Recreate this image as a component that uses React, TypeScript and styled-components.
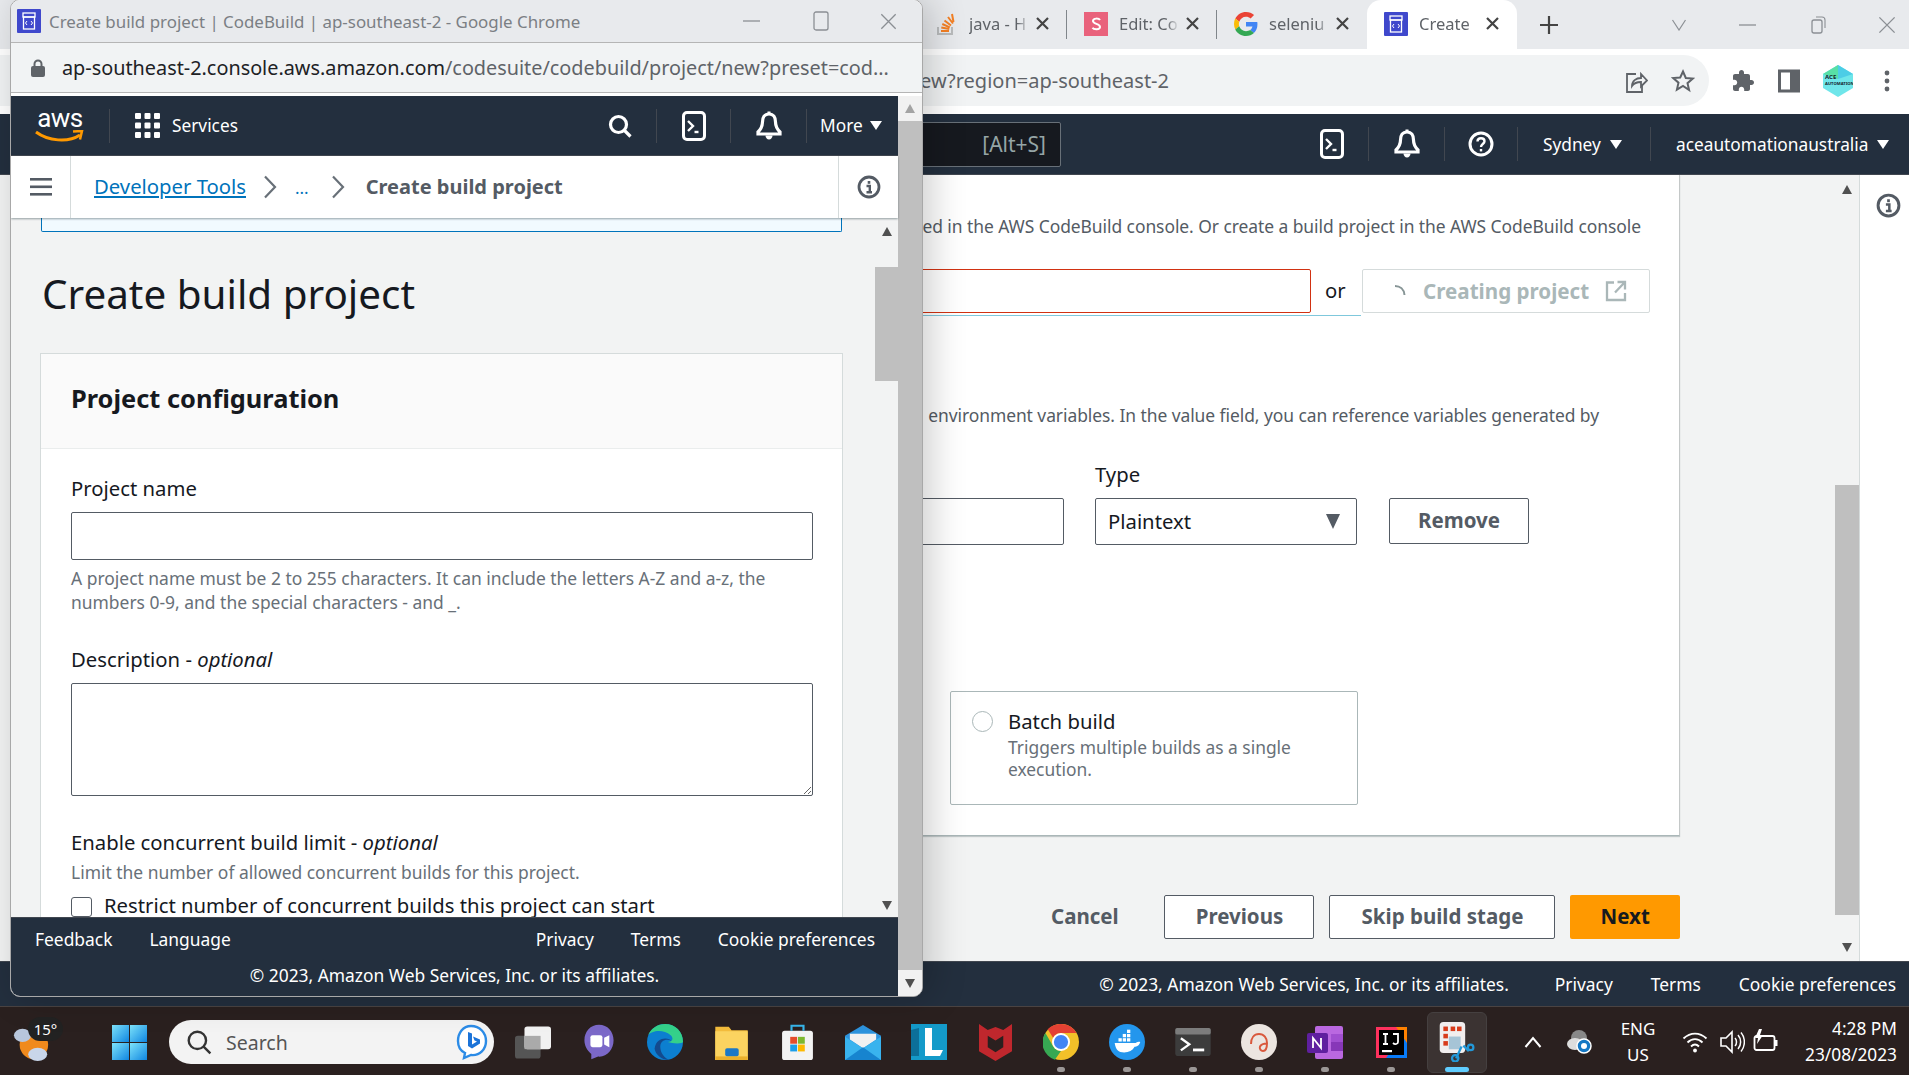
import React from 'react';
import styled, { createGlobalStyle } from 'styled-components';

const Global = createGlobalStyle`
  html, body { margin: 0; padding: 0; width: 1909px; height: 1075px; overflow: hidden; background: #fff; }
  body { font-family: "Noto Sans", Roboto, "Liberation Sans", sans-serif; color: #16191f; }
  * { box-sizing: border-box; }
`;

const Desktop = styled.div`
  position: relative; width: 1909px; height: 1075px; display: flex; flex-direction: column; overflow: hidden;
`;
const BackWindow = styled.div`
  height: 1006px; display: flex; flex-direction: column; background: #fff; flex: none;
`;
const TabStrip = styled.div`
  height: 49px; flex: none; background: #e8eaed; display: flex; align-items: stretch; padding-left: 917px; padding-right: 13px;
`;
const Tab = styled.div<{ $active?: boolean; $sep?: boolean }>`
  width: 150px; display: flex; align-items: center; padding-left: 17px; padding-bottom: 2px; position: relative;
  background: ${p => (p.$active ? '#fff' : 'transparent')};
  border-radius: ${p => (p.$active ? '14px 14px 0 0' : '0')};
  &::after {
    content: ''; display: ${p => (p.$sep ? 'block' : 'none')};
    position: absolute; right: 0; top: 10px; height: 29px; width: 1px; background: #80868b;
  }
`;
const TabLabel = styled.span`
  width: 60px; margin-left: 11px; overflow: hidden; white-space: nowrap; font-size: 16.500px; color: #5f6368;
  -webkit-mask-image: linear-gradient(90deg, #000 80%, transparent);
  mask-image: linear-gradient(90deg, #000 80%, transparent);
`;
const TabClose = styled.span`
  margin-left: 7px; display: flex;
`;
const PlusBtn = styled.div`
  margin-left: 22px; display: flex; align-items: center;
`;
const WinControls = styled.div<{ $gap: number }>`
  margin-left: auto; display: flex; align-items: center; gap: ${p => p.$gap}px;
`;

const AddressRow = styled.div`
  height: 65px; flex: none; background: #fff; display: flex; align-items: flex-start;
`;
const Pill = styled.div`
  width: 1709px; height: 51px; margin-top: 6px; background: #f1f3f4; border-radius: 0 26px 26px 0;
  display: flex; align-items: center; padding-right: 14px;
`;
const BackUrl = styled.span`
  width: 1169px; text-align: right; white-space: nowrap; font-size: 20px; color: #5f6368;
`;
const PillIcons = styled.div`
  margin-left: auto; display: flex; gap: 23px; align-items: center;
`;
const ExtIcons = styled.div`
  margin: 6px 0 0 22px; height: 51px; display: flex; gap: 23px; align-items: center;
`;
const DotsWrap = styled.span`
  margin-left: 7px; display: flex;
`;

const Nav = styled.div<{ $h: number }>`
  height: ${p => p.$h}px; flex: none; background: #232f3e; display: flex; align-items: center; color: #fff;
  border-bottom: 1px solid #414750;
`;
const NavCell = styled.div<{ $w?: number; $sep?: boolean; $ml?: string; $pl?: number }>`
  ${p => (p.$w ? `width: ${p.$w}px;` : '')}
  height: 34px; display: flex; align-items: center; flex: none;
  justify-content: ${p => (p.$pl !== undefined ? 'flex-start' : 'center')};
  padding-left: ${p => p.$pl ?? 0}px;
  margin-left: ${p => p.$ml ?? '0'};
  border-right: ${p => (p.$sep ? '1px solid #414750' : 'none')};
  font-size: 17.300px; white-space: nowrap;
`;
const ServicesWord = styled.span`
  margin-left: 12px;
`;
const SearchBox = styled.div`
  margin-left: 500px; width: 561px; height: 45px; background: #16191f; border: 1px solid #687078; border-radius: 2px; flex: none;
  display: flex; align-items: center; justify-content: flex-end; padding-right: 14px; font-size: 21px; color: #95a5a6;
`;
const CaretDown = styled.span<{ $s?: number; $ml?: number; $c?: string }>`
  display: inline-block; margin-left: ${p => p.$ml ?? 8}px;
  width: 0; height: 0;
  border-left: ${p => p.$s ?? 6}px solid transparent; border-right: ${p => p.$s ?? 6}px solid transparent;
  border-top: ${p => (p.$s ?? 6) * 1.5}px solid ${p => p.$c ?? '#fff'};
`;

const BackBody = styled.div`
  flex: 1; display: flex; min-height: 0;
`;
const BackMain = styled.div`
  width: 1835px; background: #f2f3f3; display: flex; flex-direction: column; flex: none;
`;
const BackCard = styled.div`
  margin-left: 40px; width: 1640px; height: 661px; background: #fff; flex: none;
  border-right: 1px solid #c4c8c8; border-bottom: 1px solid #aab7b8; box-shadow: 0 1px 1px rgba(0,28,36,.2);
  display: flex; flex-direction: column;
`;
const Para = styled.div<{ $mt: number; $pr: number }>`
  margin-top: ${p => p.$mt}px; padding-right: ${p => p.$pr}px; height: 24px; line-height: 24px; font-size: 17.450px; letter-spacing: -0.06px;
  color: #545b64; white-space: nowrap; text-align: right; flex: none;
`;
const SourceRow = styled.div`
  margin-top: 31px; height: 47px; display: flex; padding-right: 29px; justify-content: flex-end; flex: none;
`;
const SourceField = styled.div`
  flex: 1; display: flex; border-bottom: 1px solid #7fc8dc; padding-bottom: 1px;
`;
const RedInput = styled.input`
  flex: 1; height: 44px; min-width: 0; border: 1px solid #d13212; border-radius: 2px; background: #fff; outline: none; margin-right: 50px;
`;
const OrWord = styled.span`
  width: 1px; overflow: visible; position: relative; left: -36px; top: 7px; font-size: 20.300px; color: #16191f;
`;
const LoadingBtn = styled.div`
  width: 288px; height: 44px; border: 1px solid #d5dbdb; border-radius: 2px; display: flex; align-items: center; padding: 0 0 1px 30px;
  font-weight: 700; font-size: 20.600px; color: #aab7b8; gap: 16px; white-space: nowrap;
`;
const FieldLabel = styled.div<{ $mt: number; $ml: number }>`
  margin-top: ${p => p.$mt}px; margin-left: ${p => p.$ml}px; font-size: 20.300px; line-height: 24px; height: 24px; color: #16191f; flex: none; white-space: nowrap;
`;
const VarRow = styled.div`
  margin-top: 12px; display: flex; align-items: flex-start; flex: none;
`;
const PlainInput = styled.input<{ $w: number; $h: number }>`
  width: ${p => p.$w}px; height: ${p => p.$h}px; border: 1px solid #545b64; border-radius: 2px; background: #fff; outline: none; display: block; padding: 0;
`;
const SelectBox = styled.div`
  width: 262px; height: 47px; margin-left: 31px; border: 1px solid #545b64; border-radius: 2px; display: flex; align-items: center;
  padding: 0 15px 2px 12px; justify-content: space-between; font-size: 20.300px; color: #16191f;
`;
const OutlineBtn = styled.div<{ $w: number; $ml: number; $h: number }>`
  width: ${p => p.$w}px; height: ${p => p.$h}px; margin-left: ${p => p.$ml}px; border: 1px solid #545b64; border-radius: 2px; background: #fff; padding-bottom: 2px;
  display: flex; align-items: center; justify-content: center; font-weight: 700; font-size: 20.500px; color: #545b64; flex: none;
`;
const RadioCard = styled.div`
  margin-top: 146px; margin-left: 910px; width: 408px; height: 114px; border: 1px solid #aab7b8; border-radius: 2px; padding: 16px 0 0 21px;
  display: flex; flex: none;
`;
const Radio = styled.span`
  width: 21px; height: 21px; border-radius: 50%; border: 1.5px solid #aab7b8; background: #fff; flex: none; margin-top: 3px;
`;
const RadioText = styled.div`
  margin-left: 15px; width: 300px; display: flex; flex-direction: column;
`;
const RadioTitle = styled.div`
  font-size: 20.300px; line-height: 26px; color: #16191f;
`;
const RadioDesc = styled.div`
  font-size: 17.400px; line-height: 22px; color: #687078; margin-top: 2px;
`;
const Actions = styled.div`
  margin-top: 59px; margin-left: 1051px; width: 629px; display: flex; align-items: center; flex: none;
`;
const CancelLink = styled.span`
  font-weight: 700; font-size: 20.500px; color: #545b64; width: 114px; padding-bottom: 2px;
`;
const NextBtn = styled.div`
  width: 110px; height: 44px; margin-left: 15px; background: #ff9900; border-radius: 2px; display: flex; align-items: center; justify-content: center; padding-bottom: 2px;
  font-weight: 700; font-size: 20.500px; color: #16191f;
`;
const Track = styled.div<{ $w: number; $bg?: string }>`
  width: ${p => p.$w}px; background: ${p => p.$bg ?? '#f2f3f3'}; flex: none; display: flex; flex-direction: column;
`;
const ArrowSlot = styled.div<{ $h: number }>`
  height: ${p => p.$h}px; flex: none; display: flex; align-items: center; justify-content: center;
`;
const ArrowTri = styled.span<{ $up?: boolean; $c?: string }>`
  width: 0; height: 0; border-left: 5.500px solid transparent; border-right: 5.500px solid transparent;
  ${p => (p.$up ? `border-bottom: 9px solid ${p.$c ?? '#505050'};` : `border-top: 9px solid ${p.$c ?? '#505050'};`)}
`;
const Thumb = styled.div<{ $h?: number }>`
  background: #bfbfbf; ${p => (p.$h ? `height: ${p.$h}px; flex: none;` : 'flex: 1;')}
`;
const Spacer = styled.div<{ $h?: number }>`
  ${p => (p.$h ? `height: ${p.$h}px; flex: none;` : 'flex: 1;')}
`;
const SidePanel = styled.div`
  flex: 1; background: #fff; border-left: 1px solid #d5dbdb; display: flex; justify-content: center; padding-top: 18px; padding-left: 8px;
`;
const BackFooter = styled.div`
  height: 45px; flex: none; background: #232f3e; border-top: 1px solid #414750; display: flex; align-items: center; justify-content: flex-end;
  padding-right: 13px; color: #fff; font-size: 17.400px; gap: 38px; white-space: nowrap;
`;
const BackCopy = styled.span`
  margin-right: 8px;
`;

/* foreground window */
const FrontWindow = styled.div`
  position: absolute; left: 10px; top: -1px; width: 913px; height: 998px; border-radius: 10px; border: 1.5px solid #a8a8a8;
  background: #fff; overflow: hidden; display: flex; flex-direction: column;
  box-shadow: 8px 0 36px rgba(0,0,0,.2);
`;
const TitleBar = styled.div`
  height: 43px; flex: none; background: #e8eaed; border-bottom: 1.5px solid #b5b5b5; display: flex; align-items: center; padding: 0 25px 0 6px;
`;
const TitleText = styled.span`
  margin-left: 8px; font-size: 16.900px; color: #7b7f84; white-space: nowrap;
`;
const UrlBar = styled.div`
  height: 50px; flex: none; background: #f1f3f4; display: flex; align-items: center; padding-left: 20px; border-bottom: 1px solid #b5b5b5;
  font-size: 19.830px; color: #5f6368; white-space: nowrap;
`;
const UrlHost = styled.span`
  color: #202124; margin-left: 17px;
`;
const WhiteGap = styled.div`
  height: 3px; flex: none; background: #fff;
`;
const FrontRow = styled.div`
  flex: 1; display: flex; min-height: 0;
`;
const FrontCol = styled.div`
  width: 887px; flex: none; display: flex; flex-direction: column;
`;
const Crumbs = styled.div`
  height: 62px; flex: none; background: #fff; display: flex; align-items: center; box-shadow: 0 1px 2px rgba(0,28,36,.4); position: relative; z-index: 2;
`;
const CrumbMenu = styled.div`
  width: 60px; height: 100%; border-right: 1px solid #d5dbdb; display: flex; align-items: center; justify-content: center;
`;
const CrumbLink = styled.a`
  margin-left: 23px; padding-bottom: 2px; font-size: 20.300px; color: #0073bb; text-decoration: underline; white-space: nowrap;
`;
const CrumbDots = styled.span`
  font-size: 17px; color: #0073bb; margin: 0 22px 0 18px;
`;
const CrumbChevron = styled.span`
  margin-left: 17px; display: flex;
`;
const CrumbCurrent = styled.span`
  font-size: 20px; padding-bottom: 1px; font-weight: 700; color: #545b64; margin-left: 21px; white-space: nowrap;
`;
const CrumbInfo = styled.div`
  margin-left: auto; width: 60px; height: 100%; border-left: 1px solid #d5dbdb; display: flex; align-items: center; justify-content: center;
`;
const FormArea = styled.div`
  flex: 1; display: flex; background: #f2f3f3; min-height: 0;
`;
const FormContent = styled.div`
  width: 864px; flex: none; overflow: hidden; display: flex; flex-direction: column;
`;
const AlertEdge = styled.div`
  margin-left: 30px; width: 801px; height: 14px; flex: none; background: #f1faff; border: 1px solid #0073bb; border-top: 0; border-radius: 0 0 2px 2px;
`;
const H1 = styled.h1`
  margin: 37px 0 0 31px; font-size: 40.400px; line-height: 50px; height: 50px; font-weight: 400; color: #16191f; white-space: nowrap; flex: none;
`;
const FormCard = styled.div`
  margin: 34px 0 0 29px; width: 803px; background: #fff; border: 1px solid #d5dbdb; border-bottom: 0; flex: none;
`;
const CardHead = styled.div`
  height: 95px; background: #fafafa; border-bottom: 1px solid #eaeded; display: flex; align-items: center; padding: 0 0 7px 30px;
  font-size: 25.400px; font-weight: 700; color: #16191f;
`;
const CardBody = styled.div`
  padding: 26px 30px 0; display: flex; flex-direction: column;
`;
const Label = styled.div<{ $mt?: number }>`
  margin-top: ${p => p.$mt ?? 0}px; font-size: 20.300px; line-height: 26px; color: #16191f; white-space: nowrap;
  em { font-style: italic; }
`;
const Hint = styled.div<{ $mt: number }>`
  margin-top: ${p => p.$mt}px; font-size: 17.450px; line-height: 24px; color: #687078;
`;
const FormInput = styled.input`
  margin-top: 11px; width: 742px; height: 48px; border: 1px solid #545b64; border-radius: 2px; background: #fff; outline: none; display: block; flex: none;
`;
const FormArea2 = styled.textarea`
  margin-top: 11px; width: 742px; height: 113px; border: 1px solid #545b64; border-radius: 2px; background: #fff; outline: none; display: block; flex: none; min-height: 113px;
`;
const CheckRow = styled.label`
  margin-top: 9px; height: 24px; display: flex; align-items: center; font-size: 20.300px; color: #16191f; white-space: nowrap;
`;
const Check = styled.input`
  appearance: none; margin: 3px 12px 0 0; width: 21px; height: 20px; border: 1px solid #545b64; border-radius: 3px; background: #fff; flex: none;
`;
const FrontFooter = styled.div`
  height: 79px; flex: none; background: #232f3e; border-top: 1px solid #414750; color: #fff; font-size: 17.400px; display: flex; flex-direction: column; white-space: nowrap;
`;
const FootLinks = styled.div`
  height: 42px; display: flex; align-items: center; padding: 0 23px 0 24px; gap: 37px;
`;
const FootPush = styled.span`
  margin-left: auto;
`;
const FootCopy = styled.div`
  text-align: center; line-height: 26px; margin-top: 2px;
`;

/* Taskbar */
const Taskbar = styled.div`
  height: 69px; flex: none; background: #2a201f; border-top: 1px solid #4a4342; display: flex; align-items: center; position: relative; padding-top: 2px;
`;
const Weather = styled.div`
  width: 112px; height: 100%; flex: none; position: relative; display: flex; align-items: center; padding-left: 13px;
`;
const TempBadge = styled.span`
  position: absolute; left: 28px; top: 8px; width: 35px; height: 24px; border-radius: 12px; background: #222; color: #fff; font-size: 15px;
  display: flex; align-items: center; justify-content: center;
`;
const Start = styled.div`
  width: 35px; flex: none; display: flex;
`;
const SearchPill = styled.div`
  margin-left: 22px; margin-right: 6px; width: 325px; height: 44px; flex: none; background: #f3f3f3; border-radius: 22px; display: flex; align-items: center;
  padding: 0 6px 0 17px; font-size: 19.500px; color: #555;
`;
const SearchWord = styled.span`
  margin-left: 14px;
`;
const BingMark = styled.span`
  margin-left: auto; display: flex;
`;
const AppCell = styled.div<{ $active?: boolean }>`
  width: 66px; height: 100%; flex: none; position: relative; display: flex; align-items: center; justify-content: center;
  &::before {
    content: ''; display: ${p => (p.$active ? 'block' : 'none')}; position: absolute; left: 3px; right: 3px; top: 3px; bottom: 2px;
    background: #3b3332; border: 1px solid #454040; border-radius: 6px;
  }
  & > svg { position: relative; }
`;
const RunDot = styled.span<{ $active?: boolean }>`
  position: absolute; bottom: 3px; left: 50%; transform: translateX(-50%); height: 5px; border-radius: 3px;
  width: ${p => (p.$active ? '24px' : '8px')}; background: ${p => (p.$active ? '#60cdff' : '#9b9796')};
`;
const Tray = styled.div`
  margin-left: 20px; flex: 1; display: flex; align-items: center; height: 100%; color: #fff; position: relative;
`;
const TrayCell = styled.div<{ $w: number }>`
  width: ${p => p.$w}px; flex: none; display: flex; align-items: center; justify-content: center;
`;
const LangBox = styled.div`
  width: 68px; flex: none; text-align: center; font-size: 17px; line-height: 26px;
`;
const ClockBox = styled.div`
  margin-left: auto; padding-right: 12px; text-align: right; font-size: 17.300px; line-height: 26px; white-space: nowrap;
`;
const LogoWrap = styled.div`
  position: relative; width: 50px; display: flex; flex-direction: column; align-items: center; height: 40px;
`;
const LogoWord = styled.span`
  font-size: 26px; line-height: 24px; font-weight: 400; color: #fff; letter-spacing: -0.5px; font-family: Roboto, sans-serif;
`;
const AvatarLine = styled.text`
  font-family: "Noto Sans", sans-serif; font-weight: 700; fill: #16232a;
`;

/* ---------------- icons ---------------- */
const X = ({ s = 13, c = '#444', w = 2.2 }: { s?: number; c?: string; w?: number }) => (
  <svg width={s} height={s} viewBox="0 0 13 13"><path d="M1 1l11 11M12 1L1 12" stroke={c} strokeWidth={w} /></svg>
);
const Minimize = ({ c = '#8b8f94' }: { c?: string }) => <svg width="20" height="20" viewBox="0 0 20 20"><path d="M1 10h17" stroke={c} strokeWidth="1.3" /></svg>;
const Terminal = () => (
  <svg width="24" height="30" viewBox="0 0 24 30" fill="none"><rect x="1.5" y="1.5" width="21" height="27" rx="3.5" stroke="#fff" strokeWidth="3" /><path d="M6 10l5 5-5 5" stroke="#fff" strokeWidth="2.400" /><path d="M12.500 21h4" stroke="#fff" strokeWidth="2.400" /></svg>
);
const Bell = () => (
  <svg width="26" height="30" viewBox="0 0 26 30" fill="none"><path d="M13 3c-4.500 0-6.500 3.500-6.500 8 0 5-1.500 7-4.500 10v2h22v-2c-3-3-4.500-5-4.500-10 0-4.500-2-8-6.500-8z" stroke="#fff" strokeWidth="3.200" /><path d="M9.500 24.500c0 2 1.500 4 3.500 4s3.500-2 3.500-4z" fill="#fff" /><rect x="11.500" y="0.500" width="3" height="3" fill="#fff" /></svg>
);
const Help = () => (
  <svg width="26" height="26" viewBox="0 0 26 26" fill="none"><circle cx="13" cy="13" r="11" stroke="#fff" strokeWidth="3" /><path d="M9.500 10.500c0-2 1.500-3.300 3.500-3.300s3.500 1.300 3.500 3c0 2.800-3.500 2.800-3.500 5.800" stroke="#fff" strokeWidth="2.400" /><rect x="11.800" y="18" width="2.400" height="2.400" fill="#fff" /></svg>
);
const Info = ({ c = '#545b64', s = 24 }: { c?: string; s?: number }) => (
  <svg width={s} height={s} viewBox="0 0 24 24" fill="none"><circle cx="12" cy="12" r="10" stroke={c} strokeWidth="2.800" /><rect x="10.700" y="6" width="2.600" height="2.800" fill={c} /><path d="M9.500 11h3.300v6M9.500 17.300h5.500" stroke={c} strokeWidth="2.400" /></svg>
);
const Search = ({ c = '#fff', s = 24, w = 3.200 }: { c?: string; s?: number; w?: number }) => (
  <svg width={s} height={s} viewBox="0 0 24 24" fill="none"><circle cx="10.500" cy="10.500" r="8" stroke={c} strokeWidth={w} /><path d="M16 16l6.500 6.500" stroke={c} strokeWidth={w} /></svg>
);
const Grid = () => (
  <svg width="25" height="25" viewBox="0 0 25 25" fill="#fff">
    {[0, 9.500, 19].flatMap(x => [0, 9.500, 19].map(y => <rect key={`${x}-${y}`} x={x} y={y} width="6" height="6" rx="1" />))}
  </svg>
);
const Chevron = () => (
  <svg width="14" height="24" viewBox="0 0 14 24" fill="none"><path d="M2 1.500l10 10.500-10 10.500" stroke="#687078" strokeWidth="2.200" /></svg>
);
const CodeBuildFav = () => (
  <svg width="24" height="24" viewBox="0 0 24 24"><rect width="24" height="24" rx="1" fill="#3f48cc" /><rect x="6" y="4" width="12" height="4" fill="none" stroke="#fff" strokeWidth="1.300" /><rect x="6.500" y="8" width="11" height="12" fill="none" stroke="#fff" strokeWidth="1.300" /><path d="M10 12l-1.500 2 1.500 2M14 12l1.500 2-1.500 2" stroke="#fff" strokeWidth="1" fill="none" /></svg>
);
const StackOverflow = () => (
  <svg width="24" height="26" viewBox="0 0 24 26" fill="none"><path d="M4 16v7h14v-7" stroke="#b9bbbc" strokeWidth="2" /><path d="M7 20h8M7.300 16.500l8 1.500M8.300 13l7.500 3.300M10.500 9.500l6.500 5M14 6l5 6.500M18 3l1.500 8" stroke="#f48024" strokeWidth="2" /></svg>
);
const GoogleG = () => (
  <svg width="24" height="24" viewBox="0 0 48 48"><path fill="#EA4335" d="M24 9.500c3.500 0 6.700 1.300 9.200 3.600l6.900-6.900C35.900 2.400 30.500 0 24 0 14.600 0 6.500 5.400 2.600 13.200l8 6.200C12.400 13.700 17.700 9.500 24 9.500z" /><path fill="#4285F4" d="M46.900 24.500c0-1.600-.1-3.100-.4-4.500H24v9h12.900c-.6 3-2.200 5.500-4.800 7.200l7.700 6c4.500-4.200 7.100-10.400 7.100-17.700z" /><path fill="#FBBC05" d="M10.500 28.600c-.5-1.400-.8-3-.8-4.600s.3-3.200.8-4.600l-8-6.200C.9 16.500 0 20.100 0 24s.9 7.500 2.600 10.800z" /><path fill="#34A853" d="M24 48c6.500 0 11.900-2.100 15.900-5.800l-7.700-6c-2.200 1.400-4.900 2.300-8.200 2.300-6.300 0-11.600-4.200-13.500-9.900l-8 6.200C6.500 42.600 14.600 48 24 48z" /></svg>
);
const SImg = () => (
  <svg width="24" height="24" viewBox="0 0 24 24"><rect width="24" height="24" fill="#e9627c" /><path d="M16 8c-1-1.700-7-2.300-7 1 0 3.300 7 2.500 7 6 0 3-6.300 2.700-7.500.7" stroke="#fff" strokeWidth="2" fill="none" /></svg>
);
const Share = () => (
  <svg width="24" height="26" viewBox="0 0 24 26" fill="none"><path d="M12 6H3v18h15v-7" stroke="#5f6368" strokeWidth="1.800" /><path d="M8 18c0-5 4-8 9-8V6l6 6.500-6 6v-4.500c-4 0-7 1-9 4z" stroke="#5f6368" strokeWidth="1.800" fill="none" /></svg>
);
const Star = () => (
  <svg width="24" height="24" viewBox="0 0 24 24" fill="none"><path d="M12 2.500l2.800 6.500 7 .6-5.300 4.600 1.600 6.900L12 17l-6.100 3.600 1.600-6.900-5.300-4.600 7-.6z" stroke="#5f6368" strokeWidth="2" /></svg>
);
const Puzzle = () => (
  <svg width="24" height="24" viewBox="0 0 24 24" fill="#5f6368"><path d="M20.500 11H19V7c0-1.100-.9-2-2-2h-4V3.500C13 2.100 11.900 1 10.500 1S8 2.100 8 3.500V5H4c-1.100 0-2 .9-2 2v3.800h1.500c1.500 0 2.700 1.200 2.700 2.700S5 16.200 3.500 16.200H2V20c0 1.100.9 2 2 2h3.800v-1.500c0-1.500 1.200-2.700 2.700-2.700s2.700 1.200 2.700 2.700V22H17c1.100 0 2-.9 2-2v-4h1.500c1.400 0 2.500-1.100 2.500-2.500S21.900 11 20.500 11z" /></svg>
);
const SidePanelIco = () => (
  <svg width="22" height="24" viewBox="0 0 22 24" fill="none"><rect x="1.500" y="2" width="19" height="20" stroke="#5f6368" strokeWidth="3" /><rect x="12" y="2" width="8" height="20" fill="#5f6368" /></svg>
);
const Avatar = () => (
  <svg width="30" height="32" viewBox="0 0 30 32"><path d="M15 0l15 9v14L15 32 0 23V9z" fill="#6fe6ea" /><path d="M0 9L15 0v14z" fill="#58dfa6" /><path d="M15 0l15 9-15 5z" fill="#4ccde6" /><AvatarLine x="2" y="14" fontSize="6">ACE</AvatarLine><AvatarLine x="2" y="20" fontSize="4.200">AUTOMATION</AvatarLine></svg>
);
const Dots = () => (
  <svg width="8" height="24" viewBox="0 0 8 24" fill="#5f6368"><circle cx="4" cy="4" r="2.400" /><circle cx="4" cy="12" r="2.400" /><circle cx="4" cy="20" r="2.400" /></svg>
);
const ExtLink = () => (
  <svg width="22" height="22" viewBox="0 0 22 22" fill="none"><path d="M9 2.500H2V20h18v-7M12.500 2H20v7.500M20 2L10 12.500" stroke="#aab7b8" strokeWidth="2.300" /></svg>
);
const Spinner = () => (
  <svg width="14" height="14" viewBox="0 0 14 14" fill="none"><path d="M2 2c5 0 9 3 9.500 9" stroke="#879596" strokeWidth="2" /></svg>
);
const SmallCaret = () => <svg width="16" height="18" viewBox="0 0 16 18"><path d="M1 2h14L8 17z" fill="#545b64" /></svg>;
const Hamburger = () => (
  <svg width="22" height="18" viewBox="0 0 22 18" fill="#545b64"><rect width="22" height="2.600" /><rect y="7.500" width="22" height="2.600" /><rect y="15" width="22" height="2.600" /></svg>
);
const Lock = () => <svg width="14" height="18" viewBox="0 0 14 18" fill="#5f6368"><rect y="7" width="14" height="11" rx="2" /><path d="M3.500 8V5a3.500 3.500 0 017 0v3" stroke="#5f6368" strokeWidth="2" fill="none" /></svg>;

const StartLogo = () => (
  <svg width="35" height="35" viewBox="0 0 35 35">
    <defs><linearGradient id="st" x1="0" y1="0" x2="1" y2="1"><stop offset="0" stopColor="#7de3fb" /><stop offset="1" stopColor="#0f85e0" /></linearGradient></defs>
    <rect width="17" height="17" fill="url(#st)" /><rect x="18" width="17" height="17" fill="url(#st)" /><rect y="18" width="17" height="17" fill="url(#st)" /><rect x="18" y="18" width="17" height="17" fill="url(#st)" />
  </svg>
);
const WeatherIco = () => (
  <svg width="38" height="40" viewBox="0 0 40 42"><circle cx="22" cy="24" r="15" fill="#f08a1d" /><ellipse cx="10" cy="14" rx="9" ry="7" fill="#b8c6dc" /><ellipse cx="26" cy="34" rx="10" ry="7" fill="#c9d6ea" /></svg>
);
const Bing = () => (
  <svg width="32" height="36" viewBox="0 0 32 36" fill="none"><path d="M15 2C7 2 2 9 2 17c0 6 3 10 7 12l-1 5 7-3c9 1 15-6 15-14C30 9 24 2 15 2z" stroke="#2b8be6" strokeWidth="2.400" fill="#fff" /><path d="M12 8l4 1.500v11l5-3-2.500-1-1.500-4 7 3v4l-8 5-4-2.500z" fill="#1b73d8" /></svg>
);
const TaskView = () => (
  <svg width="36" height="33" viewBox="0 0 38 34"><rect y="10" width="27" height="24" rx="3" fill="#555" /><rect x="10" y="0" width="28" height="24" rx="3" fill="#f1f1f1" /><rect x="10" y="10" width="17" height="14" fill="#aaa" /></svg>
);
const Teams = () => (
  <svg width="34" height="36" viewBox="0 0 36 42"><path d="M18 1C8 1 1 9 1 19c0 6 3 12 8 16l0 6 8-3c10 1 18-8 18-19C35 9 28 1 18 1z" fill="#7b68c8" /><rect x="8" y="13" width="14" height="14" rx="2.500" fill="#fff" /><path d="M24 16l6-3v14l-6-3z" fill="#fff" /></svg>
);
const Edge = () => (
  <svg width="36" height="36" viewBox="0 0 38 38"><circle cx="19" cy="19" r="19" fill="#0c7fd0" /><path d="M38 19C38 8 30 0 19 0 11 0 4 5 1 12c4-5 16-7 24 0 4 4 1 7-3 7 5 2 16 2 16 0z" fill="#34d18a" /><path d="M14 24c0-7 7-9 12-6-3-4-16-5-18 8 1 6 7 12 16 12-6-2-10-8-10-14z" fill="#134a8e" /></svg>
);
const Folder = () => (
  <svg width="35" height="36" viewBox="0 0 36 40"><path d="M0 3h15l3 4h18v33H0z" fill="#f4bc3c" /><rect y="8" width="36" height="32" fill="#fbd360" /><rect x="11" y="27" width="15" height="9" rx="2" fill="#1b78c6" /><rect y="36" width="36" height="4" fill="#eab02c" /></svg>
);
const Store = () => (
  <svg width="35" height="36" viewBox="0 0 36 42"><rect y="8" width="36" height="34" rx="3" fill="#f3f3f3" /><path d="M11 8V2h14v6" stroke="#37b5ea" strokeWidth="2.500" fill="none" /><rect x="9.500" y="15" width="8" height="8" fill="#e44c2b" /><rect x="18.500" y="15" width="8" height="8" fill="#7cb82f" /><rect x="9.500" y="24" width="8" height="8" fill="#1b9ee9" /><rect x="18.500" y="24" width="8" height="8" fill="#fdb900" /></svg>
);
const Mail = () => (
  <svg width="36" height="35" viewBox="0 0 37 36"><path d="M0 11L18.500 0 37 11v25H0z" fill="#2d93dd" /><path d="M5 9h27v6L18.500 24 5 15z" fill="#f1f1f1" /><path d="M0 12l18.500 12L37 12v24H0z" fill="#39b3ee" /><path d="M0 36l18.500-13L37 36z" fill="#1784cf" /></svg>
);
const LBox = () => (
  <svg width="36" height="36" viewBox="0 0 36 36"><rect width="36" height="36" fill="#149ac9" /><path d="M14 4h7v22h11l-3 6H14z" fill="#fff" /><path d="M0 6l8-2v28H0z" fill="#0c6f99" /></svg>
);
const McAfee = () => (
  <svg width="33" height="37" viewBox="0 0 34 38"><path d="M0 0l9 6 8-3 8 3 9-6v28L17 38 0 28z" fill="#c0272d" /><path d="M9 12l8 5 8-5v12l-8 5-8-5z" fill="#2a201f" /></svg>
);
const Chrome = () => (
  <svg width="36" height="36" viewBox="0 0 38 38"><circle cx="19" cy="19" r="19" fill="#f2c029" /><path d="M19 0a19 19 0 0116.400 9.500H19a9.500 9.500 0 00-8.400 5L5 5.500A19 19 0 0119 0z" fill="#e34133" /><path d="M2.500 9.500L11 24a9.500 9.500 0 008 4.500L12.500 37.800A19 19 0 012.500 9.500z" fill="#37a853" /><circle cx="19" cy="19" r="9.500" fill="#fff" /><circle cx="19" cy="19" r="7.500" fill="#4285f4" /></svg>
);
const Docker = () => (
  <svg width="36" height="36" viewBox="0 0 38 38"><circle cx="19" cy="19" r="19" fill="#2396ed" /><path d="M6 20h22c1 0 2-2 5-1-1 4-4 5-6 5-2 4-6 6-11 6-6 0-9-3-10-10z" fill="#fff" /><g fill="#fff"><rect x="10" y="15" width="3.500" height="3.500" /><rect x="14.500" y="15" width="3.500" height="3.500" /><rect x="19" y="15" width="3.500" height="3.500" /><rect x="14.500" y="10.500" width="3.500" height="3.500" /><rect x="19" y="10.500" width="3.500" height="3.500" /><rect x="19" y="6" width="3.500" height="3.500" /></g></svg>
);
const TermApp = () => (
  <svg width="36" height="28" viewBox="0 0 38 30"><rect width="38" height="30" rx="3" fill="#3c3c3c" /><rect width="38" height="7" rx="2" fill="#7c7c7c" /><path d="M6 11l9 6.500-9 6.500" stroke="#fff" strokeWidth="2.500" fill="none" /><rect x="19" y="22" width="12" height="3" fill="#fff" /></svg>
);
const Arc = () => (
  <svg width="36" height="36" viewBox="0 0 36 36"><circle cx="18" cy="18" r="18" fill="#ece5e0" /><path d="M10 20c0-6 3-10 8-10 5 0 8 4 8 9 0 4-1 8-4 8-2 0-4-2-3-4.500 1-2 3-3 7-3" stroke="#d9583c" strokeWidth="2" fill="none" /></svg>
);
const OneNote = () => (
  <svg width="36" height="33" viewBox="0 0 36 33"><rect x="8" width="28" height="33" rx="2" fill="#ba68e0" /><rect x="24" y="8" width="12" height="8" fill="#a14fd0" /><rect x="24" y="16" width="12" height="9" fill="#8737b8" /><rect y="7" width="21" height="20" rx="2" fill="#5f1f9f" /><path d="M6 22V12l8 10V12" stroke="#fff" strokeWidth="1.800" fill="none" /></svg>
);
const IntelliJ = () => (
  <svg width="31" height="31" viewBox="0 0 31 31"><rect width="31" height="31" fill="#087cfa" /><path d="M0 0h31L10 31H0z" fill="#fe315d" /><path d="M31 0v16L20 0z" fill="#ff8100" /><rect x="3" y="3" width="25" height="25" fill="#000" /><rect x="6" y="23" width="10" height="2.200" fill="#fff" /><path d="M7 7h5M9.500 7v10M7 17h5M17 7h5v8c0 2-3 3-5 1" stroke="#fff" strokeWidth="1.800" fill="none" /></svg>
);
const Snip = () => (
  <svg width="36" height="40" viewBox="0 0 38 44"><rect width="28" height="34" rx="4" fill="#f1eeee" /><g fill="#d83b1a"><rect x="4" y="5" width="5" height="5" /><rect x="4" y="13" width="5" height="5" /><rect x="12" y="5" width="5" height="5" /><rect x="19" y="5" width="5" height="5" /><rect x="4" y="21" width="5" height="5" /></g><rect x="10" y="16" width="13" height="14" fill="#a6c4d6" /><path d="M24 27L18 40M26 26l6 6" stroke="#2399d9" strokeWidth="2.500" /><circle cx="17" cy="40" r="3.500" fill="none" stroke="#2399d9" strokeWidth="2.500" /><circle cx="34" cy="28" r="3" fill="none" stroke="#2399d9" strokeWidth="2.500" /></svg>
);
const UpCaret = () => <svg width="18" height="12" viewBox="0 0 18 12" fill="none"><path d="M1.500 11L9 2l7.500 9" stroke="#fff" strokeWidth="2" /></svg>;
const OneDrive = () => <svg width="28" height="28" viewBox="0 0 28 28"><ellipse cx="13" cy="10" rx="8" ry="8" fill="#888" /><ellipse cx="9" cy="16" rx="8" ry="6" fill="#ddd" /><circle cx="18" cy="18" r="7" fill="#1578c4" stroke="#fff" strokeWidth="1.500" /><circle cx="18" cy="18" r="3" fill="#fff" /></svg>;
const Wifi = () => <svg width="26" height="24" viewBox="0 0 26 24" fill="none"><path d="M1.500 8.500c7-6.500 16-6.500 23 0M5.500 12.500c4.500-4.500 10.500-4.500 15 0M9 16.500c2.500-2.500 5.500-2.500 8 0" stroke="#fff" strokeWidth="1.900" /><circle cx="13" cy="20.500" r="1.900" fill="#fff" /></svg>;
const Volume = () => <svg width="26" height="26" viewBox="0 0 26 26" fill="none"><path d="M2 9h5l6-6v20l-6-6H2z" stroke="#fff" strokeWidth="1.600" /><path d="M16 9c2 2 2 6 0 8M19 6c3.500 4 3.500 10 0 14M22 3.500c4.500 5.500 4.500 13.500 0 19" stroke="#fff" strokeWidth="1.500" /></svg>;
const Battery = () => <svg width="26" height="28" viewBox="0 0 26 28" fill="none"><rect x="1.500" y="8" width="20" height="14" rx="2" stroke="#fff" strokeWidth="1.800" /><rect x="22" y="12" width="2.500" height="6" fill="#fff" /><path d="M6 1L2 10h3l-1 6 6-9H7l2-6z" fill="#fff" /></svg>;
const Smile = () => (
  <svg width="50" height="16" viewBox="0 0 50 16" fill="none"><path d="M1 2c12 9 32 11 44 3" stroke="#ff9900" strokeWidth="3" /><path d="M38 1.500l9-.5-2 8.500" stroke="#ff9900" strokeWidth="2.500" /></svg>
);

export default function App() {
  return (
    <Desktop>
      <Global />
      <BackWindow>
        <TabStrip>
          <Tab $sep><StackOverflow /><TabLabel>java - H</TabLabel><TabClose><X /></TabClose></Tab>
          <Tab $sep><SImg /><TabLabel>Edit: Co</TabLabel><TabClose><X /></TabClose></Tab>
          <Tab><GoogleG /><TabLabel>seleniu</TabLabel><TabClose><X /></TabClose></Tab>
          <Tab $active><CodeBuildFav /><TabLabel>Create</TabLabel><TabClose><X /></TabClose></Tab>
          <PlusBtn><svg width="20" height="20" viewBox="0 0 20 20"><path d="M10 1v18M1 10h18" stroke="#444" strokeWidth="2.200" /></svg></PlusBtn>
          <WinControls $gap={51}>
            <svg width="16" height="12" viewBox="0 0 16 12" fill="none"><path d="M1.500 1L8 11l6.500-10" stroke="#8b8f94" strokeWidth="1.200" /></svg>
            <Minimize />
            <svg width="18" height="20" viewBox="0 0 18 20" fill="none"><rect x="3" y="5" width="10" height="13" rx="2" stroke="#8b8f94" strokeWidth="1.300" /><path d="M7 2h6c2 0 3 1 3 3v8" stroke="#8b8f94" strokeWidth="1.100" /></svg>
            <X s={18} c="#8b8f94" w={1} />
          </WinControls>
        </TabStrip>
        <AddressRow>
          <Pill>
            <BackUrl>ew?region=ap-southeast-2</BackUrl>
            <PillIcons><Share /><Star /></PillIcons>
          </Pill>
          <ExtIcons>
            <Puzzle /><SidePanelIco /><Avatar /><DotsWrap><Dots /></DotsWrap>
          </ExtIcons>
        </AddressRow>
        <Nav $h={61}>
          <SearchBox>[Alt+S]</SearchBox>
          <NavCell $w={74} $ml="234px" $sep><Terminal /></NavCell>
          <NavCell $w={76} $sep><Bell /></NavCell>
          <NavCell $w={73} $sep><Help /></NavCell>
          <NavCell $w={133} $pl={25} $sep>Sydney<CaretDown $ml={9} /></NavCell>
          <NavCell $pl={25}>aceautomationaustralia<CaretDown $ml={9} /></NavCell>
        </Nav>
        <BackBody>
          <BackMain>
            <BackCard>
              <Para $mt={39} $pr={38}>ed in the AWS CodeBuild console. Or create a build project in the AWS CodeBuild console</Para>
              <SourceRow>
                <SourceField><RedInput aria-label="Project name" /></SourceField>
                <OrWord>or</OrWord>
                <LoadingBtn><Spinner />Creating project<ExtLink /></LoadingBtn>
              </SourceRow>
              <Para $mt={87} $pr={80}>l environment variables. In the value field, you can reference variables generated by</Para>
              <FieldLabel $mt={35} $ml={1055}>Type</FieldLabel>
              <VarRow>
                <PlainInput $w={1024} $h={47} aria-label="Value" />
                <SelectBox>Plaintext<SmallCaret /></SelectBox>
                <OutlineBtn $w={140} $ml={32} $h={46}>Remove</OutlineBtn>
              </VarRow>
              <RadioCard>
                <Radio />
                <RadioText>
                  <RadioTitle>Batch build</RadioTitle>
                  <RadioDesc>Triggers multiple builds as a single execution.</RadioDesc>
                </RadioText>
              </RadioCard>
            </BackCard>
            <Actions>
              <CancelLink>Cancel</CancelLink>
              <OutlineBtn $w={150} $ml={0} $h={44}>Previous</OutlineBtn>
              <OutlineBtn $w={226} $ml={15} $h={44}>Skip build stage</OutlineBtn>
              <NextBtn>Next</NextBtn>
            </Actions>
          </BackMain>
          <Track $w={24}>
            <ArrowSlot $h={28}><ArrowTri $up /></ArrowSlot>
            <Spacer $h={282} />
            <Thumb $h={430} />
            <Spacer />
            <ArrowSlot $h={28}><ArrowTri /></ArrowSlot>
          </Track>
          <SidePanel><Info s={25} /></SidePanel>
        </BackBody>
        <BackFooter>
          <BackCopy>© 2023, Amazon Web Services, Inc. or its affiliates.</BackCopy>
          <span>Privacy</span><span>Terms</span><span>Cookie preferences</span>
        </BackFooter>
      </BackWindow>

      <Taskbar>
        <Weather><WeatherIco /><TempBadge>15°</TempBadge></Weather>
        <Start><StartLogo /></Start>
        <SearchPill>
          <Search c="#333" s={26} w={2.200} />
          <SearchWord>Search</SearchWord>
          <BingMark><Bing /></BingMark>
        </SearchPill>
        <AppCell><TaskView /></AppCell>
        <AppCell><Teams /></AppCell>
        <AppCell><Edge /></AppCell>
        <AppCell><Folder /></AppCell>
        <AppCell><Store /></AppCell>
        <AppCell><Mail /></AppCell>
        <AppCell><LBox /></AppCell>
        <AppCell><McAfee /></AppCell>
        <AppCell><Chrome /><RunDot /></AppCell>
        <AppCell><Docker /><RunDot /></AppCell>
        <AppCell><TermApp /><RunDot /></AppCell>
        <AppCell><Arc /><RunDot /></AppCell>
        <AppCell><OneNote /><RunDot /></AppCell>
        <AppCell><IntelliJ /><RunDot /></AppCell>
        <AppCell $active><Snip /><RunDot $active /></AppCell>
        <Tray>
          <TrayCell $w={46}><UpCaret /></TrayCell>
          <TrayCell $w={48}><OneDrive /></TrayCell>
          <LangBox>ENG<br />US</LangBox>
          <TrayCell $w={46}><Wifi /></TrayCell>
          <TrayCell $w={28}><Volume /></TrayCell>
          <TrayCell $w={40}><Battery /></TrayCell>
          <ClockBox>4:28 PM<br />23/08/2023</ClockBox>
        </Tray>
      </Taskbar>

      <FrontWindow>
        <TitleBar>
          <CodeBuildFav />
          <TitleText>Create build project | CodeBuild | ap-southeast-2 - Google Chrome</TitleText>
          <WinControls $gap={51}>
            <Minimize />
            <svg width="16" height="20" viewBox="0 0 16 20" fill="none"><rect x="1" y="1" width="14" height="18" rx="2" stroke="#8b8f94" strokeWidth="1.300" /></svg>
            <X s={17} c="#8b8f94" w={1} />
          </WinControls>
        </TitleBar>
        <UrlBar>
          <Lock />
          <UrlHost>ap-southeast-2.console.aws.amazon.com</UrlHost>/codesuite/codebuild/project/new?preset=cod...
        </UrlBar>
        <WhiteGap />
        <FrontRow>
          <FrontCol>
            <Nav $h={60}>
              <NavCell $w={99} $sep>
                <LogoWrap><LogoWord>aws</LogoWord><Smile /></LogoWrap>
              </NavCell>
              <NavCell $pl={25}><Grid /><ServicesWord>Services</ServicesWord></NavCell>
              <NavCell $w={74} $ml="auto" $sep><Search /></NavCell>
              <NavCell $w={74} $sep><Terminal /></NavCell>
              <NavCell $w={76} $sep><Bell /></NavCell>
              <NavCell $w={91} $pl={13}>More<CaretDown $ml={7} /></NavCell>
            </Nav>
            <Crumbs>
              <CrumbMenu><Hamburger /></CrumbMenu>
              <CrumbLink>Developer Tools</CrumbLink>
              <CrumbChevron><Chevron /></CrumbChevron>
              <CrumbDots>...</CrumbDots>
              <Chevron />
              <CrumbCurrent>Create build project</CrumbCurrent>
              <CrumbInfo><Info /></CrumbInfo>
            </Crumbs>
            <FormArea>
              <FormContent>
                <AlertEdge />
                <H1>Create build project</H1>
                <FormCard>
                  <CardHead>Project configuration</CardHead>
                  <CardBody>
                    <Label>Project name</Label>
                    <FormInput aria-label="Project name" />
                    <Hint $mt={6}>A project name must be 2 to 255 characters. It can include the letters A-Z and a-z, the numbers 0-9, and the special characters - and _.</Hint>
                    <Label $mt={32}>Description - <em>optional</em></Label>
                    <FormArea2 aria-label="Description" />
                    <Label $mt={33}>Enable concurrent build limit - <em>optional</em></Label>
                    <Hint $mt={5}>Limit the number of allowed concurrent builds for this project.</Hint>
                    <CheckRow><Check type="checkbox" />Restrict number of concurrent builds this project can start</CheckRow>
                  </CardBody>
                </FormCard>
              </FormContent>
              <Track $w={23}>
                <ArrowSlot $h={26}><ArrowTri $up /></ArrowSlot>
                <Spacer $h={23} />
                <Thumb $h={114} />
                <Spacer />
                <ArrowSlot $h={24}><ArrowTri /></ArrowSlot>
              </Track>
            </FormArea>
            <FrontFooter>
              <FootLinks>
                <span>Feedback</span><span>Language</span>
                <FootPush>Privacy</FootPush><span>Terms</span><span>Cookie preferences</span>
              </FootLinks>
              <FootCopy>© 2023, Amazon Web Services, Inc. or its affiliates.</FootCopy>
            </FrontFooter>
          </FrontCol>
          <Track $w={24} $bg="#f1f1f1">
            <ArrowSlot $h={25}><ArrowTri $up $c="#a3a3a3" /></ArrowSlot>
            <Thumb />
            <ArrowSlot $h={26}><ArrowTri /></ArrowSlot>
          </Track>
        </FrontRow>
      </FrontWindow>
    </Desktop>
  );
}
